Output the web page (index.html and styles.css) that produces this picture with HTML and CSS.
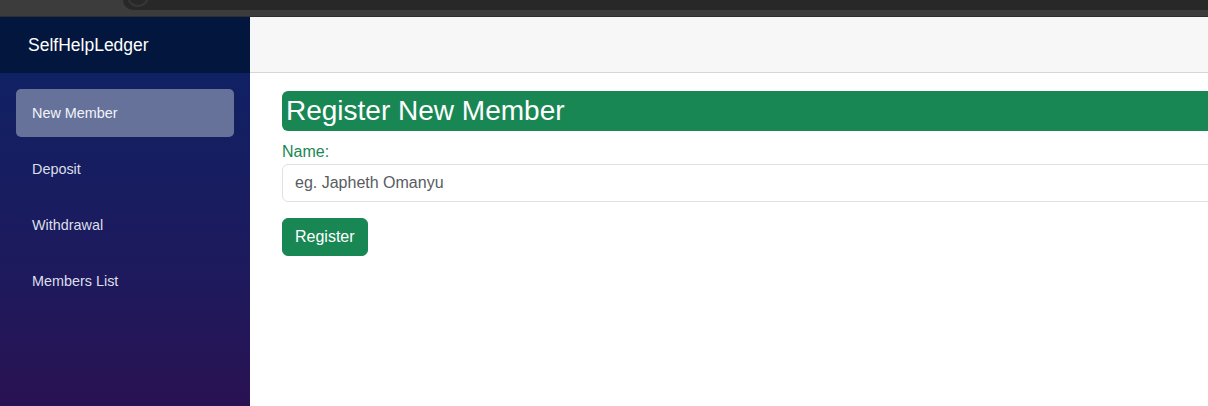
FILE: index.html
```html
<!DOCTYPE html>
<html lang="en">
<head>
<meta charset="utf-8">
<title>SelfHelpLedger</title>
<link rel="stylesheet" href="styles.css">
</head>
<body>
<div class="chrome">
  <div class="chrome-left"></div>
  <div class="chrome-bar"><span class="chrome-circle"></span></div>
</div>
<div class="app">
  <aside class="sidebar">
    <div class="brand">SelfHelpLedger</div>
    <nav class="nav">
      <a class="nav-link active" href="#">New Member</a>
      <a class="nav-link" href="#">Deposit</a>
      <a class="nav-link" href="#">Withdrawal</a>
      <a class="nav-link" href="#">Members List</a>
    </nav>
  </aside>
  <main class="main">
    <header class="topbar"></header>
    <section class="content">
      <h3 class="page-title">Register New Member</h3>
      <form class="form">
        <label class="form-label" for="name">Name:</label>
        <input class="form-control" id="name" type="text" placeholder="eg. Japheth Omanyu">
        <button class="btn" type="button">Register</button>
      </form>
    </section>
  </main>
</div>
</body>
</html>
```

FILE: styles.css
```css
* { box-sizing: border-box; }

html, body {
  margin: 0;
  padding: 0;
  height: 100%;
  overflow: hidden;
  font-family: "Liberation Sans", Arial, sans-serif;
  background: #ffffff;
}

.chrome {
  height: 17px;
  background: #3c3c3c;
  border-bottom: 1px solid #2e2e2e;
  display: flex;
  align-items: flex-start;
}

.chrome-left {
  width: 123px;
  flex: none;
}

.chrome-bar {
  flex: 1;
  height: 10px;
  background: #282828;
  border-bottom-left-radius: 10px;
  position: relative;
  overflow: hidden;
}

.chrome-circle {
  position: absolute;
  left: 4px;
  top: -15px;
  width: 22px;
  height: 22px;
  border-radius: 50%;
  border: 2px solid #363636;
}

.app {
  display: flex;
  height: calc(100vh - 17px);
}

.sidebar {
  width: 250px;
  flex: none;
  background: linear-gradient(180deg, #0c2365 0%, #1d1a5d 65%, #2a1253 100%);
  display: flex;
  flex-direction: column;
}

.brand {
  height: 56px;
  background: #03173e;
  color: #ffffff;
  font-size: 17.5px;
  display: flex;
  align-items: center;
  padding-left: 28px;
}

.nav {
  display: flex;
  flex-direction: column;
  gap: 8px;
  padding: 16px;
}

.nav-link {
  display: flex;
  align-items: center;
  height: 48px;
  padding-left: 16px;
  border-radius: 5px;
  color: #dcdfea;
  text-decoration: none;
  font-size: 14.4px;
}

.nav-link.active {
  background: #67729b;
  color: #f2f4fa;
}

.main {
  flex: 1;
  min-width: 0;
  overflow: hidden;
  display: flex;
  flex-direction: column;
}

.topbar {
  height: 56px;
  flex: none;
  background: #f7f7f7;
  border-bottom: 1px solid #d6d6d6;
}

.content {
  padding: 18px 0 0 32px;
  margin-right: -40px;
}

.page-title {
  margin: 0 0 9px;
  background: #198754;
  color: #ffffff;
  font-size: 28px;
  font-weight: 400;
  line-height: 34px;
  padding: 3px 5px 3px 4px;
  border-radius: 6px;
}

.form {
  display: flex;
  flex-direction: column;
  align-items: flex-start;
}

.form-label {
  color: #198754;
  font-size: 16px;
  line-height: 24px;
}

.form-control {
  width: 100%;
  height: 38px;
  padding: 6px 12px;
  font-family: inherit;
  font-size: 16px;
  line-height: 24px;
  color: #212529;
  background: #ffffff;
  border: 1px solid #dee2e6;
  border-radius: 6px;
  outline: none;
}

.form-control::placeholder {
  color: #595c5f;
}

.btn {
  margin-top: 16px;
  height: 38px;
  padding: 6px 12px;
  font-family: inherit;
  font-size: 16px;
  line-height: 24px;
  color: #ffffff;
  background: #198754;
  border: 1px solid #198754;
  border-radius: 6px;
}
```
